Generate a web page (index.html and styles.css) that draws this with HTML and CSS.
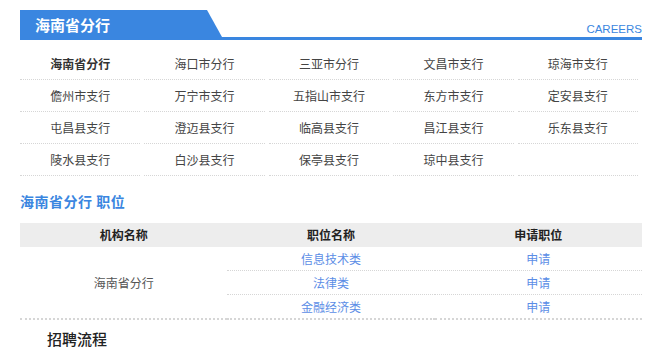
FILE: index.html
```html
<!DOCTYPE html>
<html lang="zh-CN">
<head>
    <meta charset="UTF-8">
    <title>海南省分行 - CAREERS</title>
    <link rel="stylesheet" href="styles.css">
</head>
<body>
    <div class="wrap">
        <!-- Section header -->
        <div class="section-head">
            <div class="tab">海南省分行</div>
            <a href="#" class="more">CAREERS</a>
        </div>

        <!-- Branch list -->
        <ul class="branch-list">
            <li class="current"><a href="#">海南省分行</a></li>
            <li><a href="#">海口市分行</a></li>
            <li><a href="#">三亚市分行</a></li>
            <li><a href="#">文昌市支行</a></li>
            <li><a href="#">琼海市支行</a></li>
            <li><a href="#">儋州市支行</a></li>
            <li><a href="#">万宁市支行</a></li>
            <li><a href="#">五指山市支行</a></li>
            <li><a href="#">东方市支行</a></li>
            <li><a href="#">定安县支行</a></li>
            <li><a href="#">屯昌县支行</a></li>
            <li><a href="#">澄迈县支行</a></li>
            <li><a href="#">临高县支行</a></li>
            <li><a href="#">昌江县支行</a></li>
            <li><a href="#">乐东县支行</a></li>
            <li><a href="#">陵水县支行</a></li>
            <li><a href="#">白沙县支行</a></li>
            <li><a href="#">保亭县支行</a></li>
            <li><a href="#">琼中县支行</a></li>
            <li></li>
        </ul>

        <!-- Jobs -->
        <h3 class="job-title">海南省分行 职位</h3>
        <table class="job-table">
            <thead>
                <tr>
                    <th>机构名称</th>
                    <th>职位名称</th>
                    <th>申请职位</th>
                </tr>
            </thead>
            <tbody>
                <tr>
                    <td class="org" rowspan="3">海南省分行</td>
                    <td class="line"><a href="#">信息技术类</a></td>
                    <td class="line"><a href="#">申请</a></td>
                </tr>
                <tr>
                    <td class="line"><a href="#">法律类</a></td>
                    <td class="line"><a href="#">申请</a></td>
                </tr>
                <tr>
                    <td><a href="#">金融经济类</a></td>
                    <td><a href="#">申请</a></td>
                </tr>
            </tbody>
        </table>

        <h3 class="process-title">招聘流程</h3>
    </div>
</body>
</html>
```

FILE: styles.css
```css
/* Global styles */
body {
    margin: 0;
    padding: 0;
    background: #fff;
    color: #333;
    font-family: "Noto Sans CJK SC", "Noto Sans", sans-serif;
    font-size: 12px;
}

a {
    text-decoration: none;
}

.wrap {
    width: 622px;
    margin: 10px 0 0 20px;
}

/* Section header */
.section-head {
    display: flex;
    justify-content: space-between;
    align-items: flex-end;
    border-bottom: 3px solid #3a86e0;
}

.tab {
    width: 202px;
    height: 27px;
    padding-left: 15px;
    box-sizing: border-box;
    background-color: #3a86e0;
    clip-path: polygon(0 0, 187px 0, 100% 100%, 0 100%);
    color: #fff;
    font-size: 15px;
    font-weight: bold;
    line-height: 29px;
}

.more {
    color: #3a86e0;
    font-family: "Liberation Sans", Arial, sans-serif;
    font-size: 11.5px;
    line-height: 12px;
    padding-bottom: 2px;
}

/* Branch list */
.branch-list {
    list-style: none;
    margin: 0;
    padding: 8px 0 0;
    display: grid;
    grid-template-columns: repeat(5, 1fr);
}

.branch-list li {
    height: 31px;
    margin-right: 4px;
    line-height: 31px;
    text-align: center;
    border-bottom: 1px dotted #d6d6d6;
}

.branch-list a {
    color: #444;
}

.branch-list .current a {
    color: #333;
    font-weight: bold;
}

/* Jobs */
.job-title {
    margin: 15px 0 12px;
    color: #3a86e0;
    font-size: 14px;
    font-weight: bold;
    line-height: 20px;
    letter-spacing: 0.5px;
}

.job-table {
    width: 100%;
    border-collapse: collapse;
    table-layout: fixed;
    border-bottom: 2px dotted #d6d6d6;
}

.job-table th {
    height: 24px;
    padding: 0;
    background-color: #ededed;
    color: #222;
    font-weight: bold;
    line-height: 24px;
}

.job-table td {
    height: 23px;
    padding: 0;
    text-align: center;
    line-height: 23px;
}

.job-table td.line {
    border-bottom: 1px dotted #d6d6d6;
}

.job-table td.org {
    color: #555;
}

.job-table td a {
    color: #5b8de6;
}

.process-title {
    margin: 8px 0 0 27px;
    color: #222;
    font-size: 15px;
    font-weight: 500;
    line-height: 22px;
}
```
